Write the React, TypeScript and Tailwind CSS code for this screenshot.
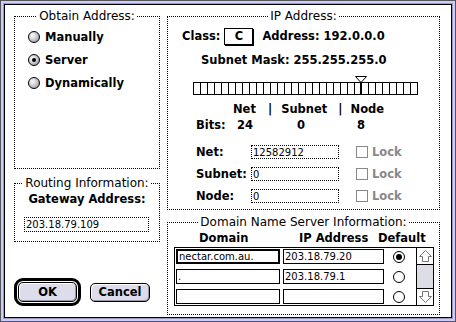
import React from "react";

const chicago = "font-['DejaVu_Sans',sans-serif] font-bold text-[11.5px] leading-[16px]";
const geneva = "font-['DejaVu_Sans',sans-serif] text-[12px] leading-[14px]";
const small = "font-['DejaVu_Sans',sans-serif] text-[10px] leading-[12px]";

function Group({
  title,
  className,
  children,
}: {
  title: string;
  className: string;
  children: React.ReactNode;
}) {
  return (
    <fieldset className={"border border-dotted border-black " + className}>
      <legend className={geneva + " mx-auto px-[2px]"}>{title}</legend>
      {children}
    </fieldset>
  );
}

function Radio3D({ checked }: { checked?: boolean }) {
  return (
    <span className="flex h-[12px] w-[12px] items-center justify-center rounded-full border border-black bg-radial-[at_35%_35%] from-white to-[#8c8c9c]">
      {checked && <span className="h-[4px] w-[4px] rounded-full bg-black" />}
    </span>
  );
}

function MacButton({ label, className }: { label: string; className: string }) {
  return (
    <div
      className={
        "flex items-center justify-center rounded-[5px] border border-black bg-[#dcdcea] shadow-[inset_1px_1px_0_#fff,inset_-1px_-1px_0_#9999aa] " +
        chicago +
        " " +
        className
      }
    >
      {label}
    </div>
  );
}

function Lock() {
  return (
    <div className="ml-[17px] flex items-center">
      <span className="h-[12px] w-[12px] border border-[#888]" />
      <span className={chicago + " ml-[4px] text-[#888]"}>Lock</span>
    </div>
  );
}

function BitBar() {
  const lines = [];
  for (let i = 1; i < 32; i++) {
    lines.push(<line key={i} x1={7 * i + 0.5} y1={8} x2={7 * i + 0.5} y2={19} stroke="black" />);
  }
  return (
    <svg width="226" height="20" className="mt-[7px] ml-[25px]">
      <rect x="0.5" y="7.5" width="224" height="12" fill="white" stroke="black" />
      {lines}
      <rect x="167" y="7" width="2" height="13" fill="black" />
      <polygon points="162.5,1.5 173.5,1.5 168.5,7 167.5,7" fill="white" stroke="black" />
    </svg>
  );
}

function ArrowUp() {
  return (
    <svg width="17" height="16" className="block">
      <path d="M8.5 2.5 L14.5 8.5 H11.5 V13.5 H5.5 V8.5 H2.5 Z" fill="white" stroke="#777" />
    </svg>
  );
}

function ArrowDown() {
  return (
    <svg width="17" height="16" className="block">
      <path d="M8.5 13.5 L14.5 7.5 H11.5 V2.5 H5.5 V7.5 H2.5 Z" fill="white" stroke="#777" />
    </svg>
  );
}

function FieldRow({ label, value }: { label: string; value: string }) {
  return (
    <div className="flex h-[14px] items-center pl-[28px]">
      <span className={chicago + " w-[55px]"}>{label}</span>
      <div className={small + " h-[14px] w-[88px] border border-dotted border-black pl-[1px] pt-px"}>{value}</div>
      <Lock />
    </div>
  );
}

function DnsRow({
  domain,
  ip,
  selected,
  focus,
}: {
  domain: string;
  ip: string;
  selected?: boolean;
  focus?: boolean;
}) {
  return (
    <div className="flex h-[15px] items-center">
      <div
        className={
          small +
          " ml-[1px] h-[15px] w-[104px] border-black pl-[1px] " +
          (focus ? "border-2 pt-0" : "border pt-px")
        }
      >
        {domain}
      </div>
      <div className={small + " ml-[3px] h-[15px] w-[101px] border border-black pl-[1px] pt-px"}>{ip}</div>
      <span className="ml-[9px] flex h-[12px] w-[12px] items-center justify-center rounded-full border border-black">
        {selected && <span className="h-[6px] w-[6px] rounded-full bg-black" />}
      </span>
    </div>
  );
}

export default function App() {
  return (
    <div className="h-[322px] w-[456px] bg-[#555] p-px">
      <div className="h-full bg-[#ccccff] p-[2px]">
        <div className="h-full bg-[#9999bb] p-px">
          <div className="h-full bg-black p-px">
            <div className="flex h-full gap-[7px] bg-white pl-[9px] pt-[4px]">
              {/* left column */}
              <div className="flex w-[146px] flex-col">
                <Group title="Obtain Address:" className="h-[160px]">
                  <div className="mt-[6px] flex flex-col gap-[7px] pl-[13px]">
                    <div className="flex h-[16px] items-center gap-[5px]">
                      <Radio3D />
                      <span className={chicago}>Manually</span>
                    </div>
                    <div className="flex h-[16px] items-center gap-[5px]">
                      <Radio3D checked />
                      <span className={chicago}>Server</span>
                    </div>
                    <div className="flex h-[16px] items-center gap-[5px]">
                      <Radio3D />
                      <span className={chicago}>Dynamically</span>
                    </div>
                  </div>
                </Group>
                <Group title="Routing Information:" className="mt-[7px] h-[66px]">
                  <div className={chicago + " mt-[1px] text-center"}>Gateway Address:</div>
                  <div className={small + " ml-[9px] mt-[10px] h-[15px] w-[125px] border border-dotted border-black pl-[1px] pt-px"}>
                    203.18.79.109
                  </div>
                </Group>
                <div className="mt-[36px] flex items-center">
                  <div className="rounded-[9px] border-[3px] border-black p-px">
                    <MacButton label="OK" className="h-[20px] w-[59px]" />
                  </div>
                  <MacButton label="Cancel" className="ml-[9px] h-[19px] w-[60px]" />
                </div>
              </div>

              {/* right column */}
              <div className="flex w-[273px] flex-col">
                <Group title="IP Address:" className="h-[201px]">
                  <div className="mt-[4px] flex h-[18px] items-center pl-[14px]">
                    <span className={chicago}>Class:</span>
                    <div className={chicago + " ml-[4px] flex h-[17px] w-[29px] items-center justify-center border border-black shadow-[1px_1px_0_#000]"}>
                      C
                    </div>
                    <span className={chicago + " ml-[9px]"}>Address: 192.0.0.0</span>
                  </div>
                  <div className={chicago + " mt-[7px] h-[16px] pl-[33px]"}>Subnet Mask: 255.255.255.0</div>
                  <BitBar />
                  <div className={chicago + " mt-[6px] flex h-[16px] pl-[65px]"}>
                    <span>Net</span>
                    <span className="ml-[12px]">|</span>
                    <span className="ml-[9px]">Subnet</span>
                    <span className="ml-[11px]">|</span>
                    <span className="ml-[8px]">Node</span>
                  </div>
                  <div className={chicago + " flex h-[16px] pl-[28px]"}>
                    <span className="w-[41px]">Bits:</span>
                    <span className="w-[60px]">24</span>
                    <span className="w-[60px]">0</span>
                    <span>8</span>
                  </div>
                  <div className="mt-[12px] flex flex-col gap-[8px]">
                    <FieldRow label="Net:" value="12582912" />
                    <FieldRow label="Subnet:" value="0" />
                    <FieldRow label="Node:" value="0" />
                  </div>
                </Group>

                <Group title="Domain Name Server Information:" className="mt-[5px] h-[100px]">
                  <div className={chicago + " mt-[1px] flex h-[16px] pl-[31px]"}>
                    <span className="w-[100px]">Domain</span>
                    <span className="w-[79px]">IP Address</span>
                    <span>Default</span>
                  </div>
                  <div className="ml-[6px] mt-[1px] flex h-[59px] w-[260px] border border-black">
                    <div className="flex flex-1 flex-col gap-[5px] py-[1px]">
                      <DnsRow domain="nectar.com.au." ip="203.18.79.20" selected focus />
                      <DnsRow domain="." ip="203.18.79.1" />
                      <DnsRow domain="" ip="" />
                    </div>
                    <div className="flex w-[17px] flex-col justify-between border-l border-black bg-[#dddde6]">
                      <div className="border-b border-black bg-white">
                        <ArrowUp />
                      </div>
                      <div className="border-t border-black bg-white">
                        <ArrowDown />
                      </div>
                    </div>
                  </div>
                </Group>
              </div>
            </div>
          </div>
        </div>
      </div>
    </div>
  );
}
